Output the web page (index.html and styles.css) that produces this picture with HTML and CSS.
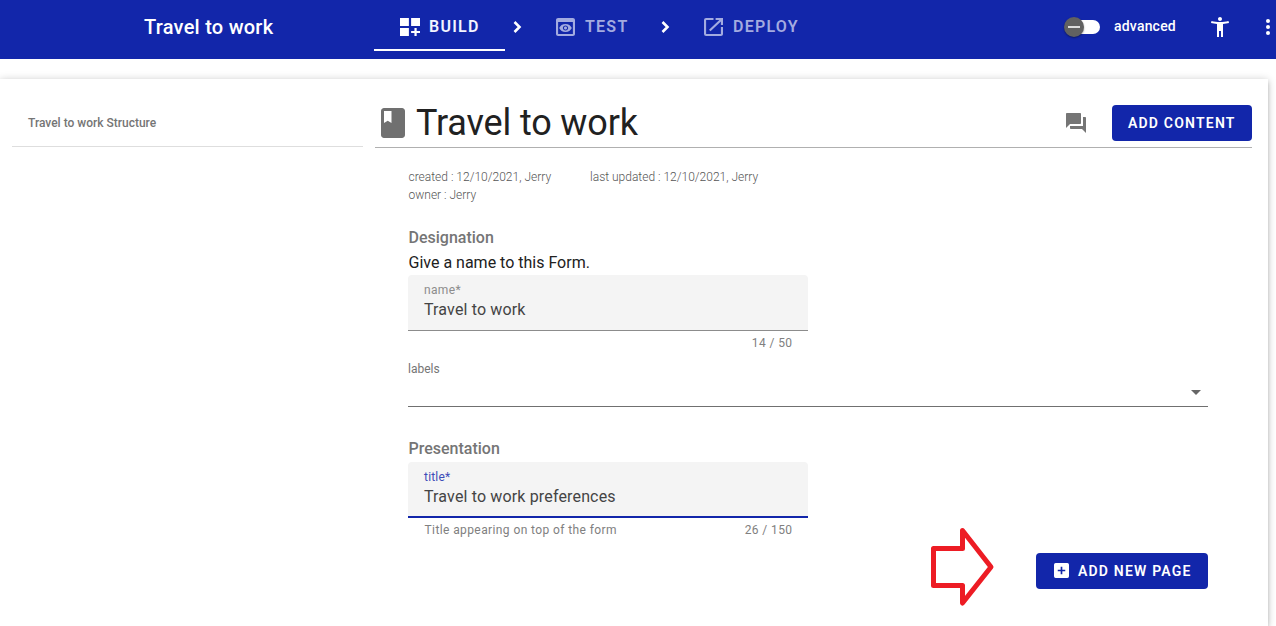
FILE: index.html
```
<!DOCTYPE html>
<html lang="en">
<head>
<meta charset="utf-8">
<title>Travel to work</title>
<link rel="stylesheet" href="styles.css">
</head>
<body>
<header class="topbar">
  <div class="app-title"><span class="t">Travel to work</span></div>
  <nav class="steps">
    <a class="step active"><svg class="step-icon" viewBox="3 3 18 18" preserveAspectRatio="none"><path d="M3 3h8v8H3zM13 3h8v8h-8zM3 13h8v8H3zM18 13h-2v3h-3v2h3v3h2v-3h3v-2h-3z"/></svg><span class="t build">BUILD</span></a>
    <svg class="chevron first" viewBox="0 0 24 24"><path d="M8.5 7l5 5-5 5"/></svg>
    <a class="step test"><svg class="step-icon" viewBox="3 3 18 18" preserveAspectRatio="none"><path d="M19 3H5c-1.11 0-2 .9-2 2v14c0 1.1.89 2 2 2h14c1.1 0 2-.9 2-2V5c0-1.1-.89-2-2-2zm0 16H5V7h14v12zm-5.500-6c0 .83-.67 1.500-1.500 1.500s-1.500-.67-1.500-1.500.67-1.500 1.500-1.500 1.500.67 1.500 1.500zM12 9c-2.730 0-5.060 1.660-6 4 .94 2.340 3.270 4 6 4s5.060-1.660 6-4c-.94-2.340-3.270-4-6-4zm0 6.500c-1.380 0-2.500-1.120-2.500-2.500s1.120-2.500 2.500-2.500 2.500 1.120 2.500 2.500-1.120 2.500-2.500 2.500z"/></svg><span class="t">TEST</span></a>
    <svg class="chevron second" viewBox="0 0 24 24"><path d="M8.500 7l5 5-5 5"/></svg>
    <a class="step deploy"><svg class="step-icon" viewBox="3 3 18 18" preserveAspectRatio="none"><path d="M19 19H5V5h7V3H5a2 2 0 0 0-2 2v14a2 2 0 0 0 2 2h14c1.100 0 2-.9 2-2v-7h-2v7zM14 3v2h3.590l-9.830 9.830 1.410 1.410L19 6.410V10h2V3h-7z"/></svg><span class="t">DEPLOY</span></a>
  </nav>
  <div class="tools">
    <span class="switch"><span class="thumb"></span></span>
    <span class="t advanced">advanced</span>
    <svg class="icon access" viewBox="0 0 24 24"><path d="M20.500 6c-2.610.7-5.670 1-8.500 1s-5.890-.3-8.500-1L3 8c1.860.5 4 .83 6 1v13h2v-6h2v6h2V9c2-.17 4.140-.5 6-1l-.5-2zM12 6c1.100 0 2-.9 2-2s-.9-2-2-2-2 .9-2 2 .9 2 2 2z"/></svg>
    <svg class="icon more" viewBox="0 0 24 24"><circle cx="12" cy="6" r="2"/><circle cx="12" cy="12" r="2"/><circle cx="12" cy="18" r="2"/></svg>
  </div>
</header>
<div class="sheet">
  <aside class="sidebar"><span class="t">Travel to work Structure</span></aside>
  <main class="main">
    <div class="heading">
      <svg class="book" viewBox="0 0 24 24"><path d="M18 2H6c-1.100 0-2 .9-2 2v16c0 1.100.9 2 2 2h12c1.100 0 2-.9 2-2V4c0-1.100-.9-2-2-2zM6 4h5v8l-2.500-1.500L6 12V4z"/></svg>
      <h1><span class="t">Travel to work</span></h1>
      <svg class="icon chat" viewBox="0 0 24 24"><path d="M21 6h-2v9H6v2c0 .55.45 1 1 1h11l4 4V7c0-.55-.45-1-1-1zm-4 6V3c0-.55-.45-1-1-1H3c-.55 0-1 .45-1 1v14l4-4h10c.55 0 1-.45 1-1z"/></svg>
      <button class="button add-content"><span class="t">ADD CONTENT</span></button>
    </div>
    <div class="body">
      <div class="meta">
        <div><span class="t">created : 12/10/2021, Jerry</span></div>
        <div><span class="t">last updated : 12/10/2021, Jerry</span></div>
        <div><span class="t">owner : Jerry</span></div>
      </div>
      <h2 class="section"><span class="t">Designation</span></h2>
      <p class="lead"><span class="t">Give a name to this Form.</span></p>
      <div class="field">
        <label><span class="t">name*</span></label>
        <div class="value"><span class="t">Travel to work</span></div>
      </div>
      <div class="helper"><span></span><span class="t">14 / 50</span></div>
      <div class="select">
        <span class="t">labels</span>
        <svg viewBox="0 0 10 5"><path d="M0 0h10L5 5z"/></svg>
      </div>
      <h2 class="section"><span class="t">Presentation</span></h2>
      <div class="field focused">
        <label><span class="t">title*</span></label>
        <div class="value"><span class="t">Travel to work preferences</span></div>
      </div>
      <div class="helper"><span class="t">Title appearing on top of the form</span><span class="t">26 / 150</span></div>
      <div class="actions">
        <button class="button add-page"><svg viewBox="3 3 18 18"><path fill-rule="evenodd" d="M5 3h14a2 2 0 0 1 2 2v14a2 2 0 0 1-2 2H5a2 2 0 0 1-2-2V5a2 2 0 0 1 2-2zM11 7.500V11H7.500v2H11v3.500h2V13h3.500v-2H13V7.500z"/></svg><span class="t">ADD NEW PAGE</span></button>
      </div>
    </div>
  </main>
</div>
<svg class="pointer" viewBox="0 0 66 80"><path d="M4.500 21.500H33.500V3.500L62 40 33.500 76V58.500H4.500z"/></svg>
</body>
</html>
```
FILE: styles.css
```
* { box-sizing: border-box; }
body {
  display: flex;
  flex-direction: column;
  margin: 0;
  height: 626px;
  overflow: hidden;
  background: #fff;
  color: #212121;
  font-family: Roboto, "Liberation Sans", sans-serif;
}
h1, h2, p { margin: 0; font-weight: 400; }
svg { display: block; flex: none; }
.t { white-space: nowrap; }
.icon { width: 24px; height: 24px; fill: currentColor; }

.topbar {
  display: flex;
  flex: none;
  height: 59px;
  background: #1226aa;
  color: #fff;
}
.app-title {
  width: 374px;
  padding-left: 144px;
  font-size: 20px;
  font-weight: 500;
  letter-spacing: .25px;
  line-height: 54px;
}
.steps { display: flex; }
.step {
  display: flex;
  align-items: center;
  height: 51px;
  padding-top: 3px;
  font-size: 16px;
  font-weight: 600;
  letter-spacing: 1.25px;
  color: #a3abe0;
}
.step .t { margin-top: -2px; }
.step.active {
  width: 131px;
  padding-left: 26px;
  border-bottom: 2px solid #fff;
  padding-top: 5px;
  color: #f3f4ff;
}
.step.test { width: 99px; }
.step-icon { width: 19px; height: 18px; margin-right: 10px; fill: currentColor; }
.active .step-icon { width: 20px; margin-right: 9px; fill: #fff; }
.chevron {
  width: 24px;
  height: 24px;
  margin-top: 15px;
  fill: none;
  stroke: #fff;
  stroke-width: 2.6;
}
.chevron.first { margin-left: 1px; margin-right: 26px; }
.chevron.second { margin-left: -1px; margin-right: 26px; }
.tools {
  display: flex;
  align-items: center;
  height: 54px;
  margin-left: auto;
  margin-right: -4px;
}
.switch {
  width: 34px;
  height: 14px;
  margin-right: 14px;
  border-radius: 7px;
  background: #fff;
}
.thumb {
  display: flex;
  align-items: center;
  justify-content: center;
  width: 20px;
  height: 20px;
  margin: -3px 0 0 -2px;
  border-radius: 50%;
  background: #616161;
  box-shadow: 0 1px 2px rgba(0, 0, 0, .4);
}
.thumb::before { content: ""; width: 12px; height: 2px; background: #ddd; }
.advanced { width: 94px; font-size: 14px; font-weight: 500; letter-spacing: .2px; line-height: 18px; margin-top: -2px; }
.more { margin-left: 24px; }

.sheet {
  display: flex;
  flex: 1;
  width: 1268px;
  min-height: 0;
  margin-top: 20px;
  padding: 0 16px 0 12px;
  background: #fff;
  box-shadow: 0 3px 3px -2px rgba(0, 0, 0, .2), 0 3px 4px rgba(0, 0, 0, .14), 0 1px 8px rgba(0, 0, 0, .22);
}
.sidebar {
  width: 351px;
  height: 68px;
  margin-right: 12px;
  padding-left: 16px;
  border-bottom: 1px solid #dedede;
  font-size: 12px;
  font-weight: 500;
  line-height: 88px;
  color: #757575;
}
.main { width: 877px; }
.heading {
  display: flex;
  align-items: center;
  height: 69px;
  padding-top: 19px;
  border-bottom: 1px solid #b0b0b0;
}
.book { width: 36px; height: 36px; fill: #707070; }
h1 { margin-left: 5px; font-size: 36px; line-height: 48px; letter-spacing: -.15px; }
.chat { margin-left: auto; margin-right: 24px; color: #757575; }
.button {
  height: 36px;
  padding: 0 0 0 16px;
  border: 0;
  border-radius: 4px;
  background: #1226aa;
  color: #fff;
  font: 600 14px/34px Roboto, sans-serif;
  letter-spacing: 1.2px;
  text-align: left;
}
.add-content { width: 140px; }
.body { padding: 20px 44px 0 33px; }
.meta {
  display: grid;
  grid-template-columns: 181.5px 1fr;
  padding-left: .5px;
  font-size: 12px;
  font-weight: 300;
  line-height: 18px;
  color: #555;
}
.section {
  margin-top: 24px;
  padding-left: .5px;
  font-size: 16px;
  font-weight: 500;
  line-height: 20px;
  color: #757575;
}
.lead { margin-top: 3px; padding-left: .5px; font-size: 16px; line-height: 24px; }
.field {
  width: 400px;
  height: 56px;
  padding: 7px 16px 0;
  border-bottom: 1px solid #8c8c8c;
  border-radius: 4px 4px 0 0;
  background: #f4f4f4;
}
.field label { display: block; font-size: 12px; line-height: 16px; letter-spacing: .35px; color: #8c8c8c; }
.value { font-size: 16px; line-height: 24px; letter-spacing: .15px; color: #444; }
.focused { border-bottom: 2px solid #1226aa; }
.focused label { color: #3d4db8; letter-spacing: .2px; }
.helper {
  display: flex;
  justify-content: space-between;
  width: 400px;
  height: 24px;
  padding: 0 15.5px 0 16.5px;
  font-size: 12px;
  line-height: 24px;
  letter-spacing: .4px;
  color: #808080;
}
.select {
  display: flex;
  justify-content: space-between;
  height: 52px;
  padding-right: 7px;
  border-bottom: 1px solid #707070;
  font-size: 12px;
  line-height: 28px;
  color: #757575;
}
.select svg { width: 10px; height: 5px; margin-top: 35px; fill: #666; }
.select + .section { margin-top: 32px; margin-bottom: 3px; }
.actions { display: flex; justify-content: flex-end; padding-top: 11px; }
.add-page { display: flex; align-items: center; width: 172px; padding-left: 18px; }
.add-page svg { width: 15px; height: 15px; margin: -2px 9px 0 0; fill: #fff; }
.pointer {
  position: absolute;
  left: 929px;
  top: 527px;
  width: 66px;
  height: 80px;
  fill: none;
  stroke: #ed1c24;
  stroke-width: 5;
  stroke-linejoin: round;
}
```
